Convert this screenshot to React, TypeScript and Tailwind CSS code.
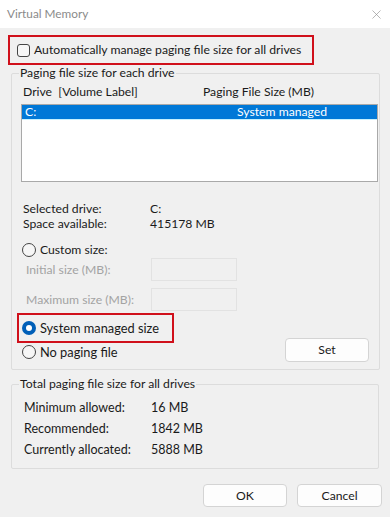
import { X } from 'lucide-react';

function Radio({ checked = false }: { checked?: boolean }) {
  if (checked) {
    return (
      <span className="w-[14px] h-[14px] rounded-full bg-[#005fb8] flex items-center justify-center shrink-0">
        <span className="w-[6px] h-[6px] rounded-full bg-white" />
      </span>
    );
  }
  return <span className="w-[14px] h-[14px] rounded-full border border-[#444] bg-[#f6f6f6] shrink-0" />;
}

function InfoRow({ label, value, h = 'h-[15px]' }: { label: string; value: string; h?: string }) {
  return (
    <div className={`flex items-center ${h}`}>
      <span className="w-[127px]">{label}</span>
      <span>{value}</span>
    </div>
  );
}

export default function App() {
  return (
    <div
      className="w-[390px] h-[517px] bg-[#f0f0f0] text-[12.2px] leading-[16px] text-[#1a1a1a] flex flex-col overflow-hidden whitespace-nowrap"
      style={{ fontFamily: 'Lato, "Noto Sans", sans-serif' }}
    >
      {/* title bar */}
      <div className="h-[28px] bg-white flex items-center justify-between pl-[7px] pr-[6px] shrink-0">
        <span className="text-[#8a8a8a] text-[11.8px]">Virtual Memory</span>
        <X size={15} strokeWidth={1} className="text-[#8a8a8a]" />
      </div>

      {/* auto manage */}
      <div className="mt-[7px] ml-[8px] w-[306px] h-[30px] border-[2.5px] border-[#d0101b] flex items-center pl-[7px] gap-[4px] shrink-0">
        <span className="w-[13px] h-[13px] border border-[#444] rounded-[3px] bg-[#f6f6f6] shrink-0" />
        <span>Automatically manage paging file size for all drives</span>
      </div>

      {/* group 1 */}
      <fieldset className="ml-[11px] w-[369px] border border-[#dcdcdc] rounded-[2px] pb-[7px] shrink-0">
        <legend className="ml-[7px] px-[1px] h-[16px]">Paging file size for each drive</legend>

        <div className="mt-[3px] flex h-[16px] pl-[11px]">
          <span className="w-[180px]">Drive&nbsp; [Volume Label]</span>
          <span>Paging File Size (MB)</span>
        </div>

        <div className="mt-[4px] ml-[9px] w-[357px] h-[78px] border border-[#a9a9a9] bg-white">
          <div className="h-[15px] bg-[#0078d7] text-white flex items-center pl-[3px] border-b border-[#c6f1ff]">
            <span className="w-[212px]">C:</span>
            <span>System managed</span>
          </div>
        </div>

        <div className="mt-[19px] pl-[11px]">
          <InfoRow label="Selected drive:" value="C:" />
          <InfoRow label="Space available:" value="415178 MB" />
        </div>

        <div className="mt-[11px] pl-[10px] flex items-center gap-[4px] h-[16px]">
          <Radio />
          <span>Custom size:</span>
        </div>

        <div className="flex items-center h-[23px] pl-[14px] text-[#a3a3a3]">
          <span className="w-[125px]">Initial size (MB):</span>
          <span className="w-[86px] h-[23px] border border-[#e2e2e2] bg-[#f0f0f0]" />
        </div>
        <div className="mt-[7px] flex items-center h-[23px] pl-[14px] text-[#a3a3a3]">
          <span className="w-[125px]">Maximum size (MB):</span>
          <span className="w-[86px] h-[23px] border border-[#e2e2e2] bg-[#f0f0f0]" />
        </div>

        <div className="mt-[2px] flex items-end justify-between">
          <div className="flex flex-col">
            <div className="ml-[5px] w-[157px] h-[30px] border-[2.5px] border-[#d0101b] flex items-center pl-[3px] gap-[4px]">
              <Radio checked />
              <span className="text-[12.8px]">System managed size</span>
            </div>
            <div className="pl-[10px] flex items-center gap-[4px] h-[17px]">
              <Radio />
              <span className="text-[12.8px]">No paging file</span>
            </div>
            <div className="h-[2px]" />
          </div>
          <button className="mr-[10px] w-[84px] h-[24px] bg-[#fdfdfd] border border-[#d4d4d4] rounded-[4px]">
            Set
          </button>
        </div>
      </fieldset>

      {/* group 2 */}
      <fieldset className="mt-[6px] ml-[11px] w-[368px] border border-[#dcdcdc] rounded-[2px] pb-[8px] shrink-0">
        <legend className="ml-[7px] px-[1px] h-[16px]">Total paging file size for all drives</legend>
        <div className="mt-[5px] pl-[12px] text-[12.5px]">
          <InfoRow label="Minimum allowed:" value="16 MB" h="h-[21px]" />
          <InfoRow label="Recommended:" value="1842 MB" h="h-[21px]" />
          <InfoRow label="Currently allocated:" value="5888 MB" h="h-[21px]" />
        </div>
      </fieldset>

      <div className="mt-[15px] flex justify-end gap-[10px] pr-[8px]">
        <button className="w-[84px] h-[23px] bg-[#fdfdfd] border border-[#d4d4d4] rounded-[4px]">OK</button>
        <button className="w-[85px] h-[23px] bg-[#fdfdfd] border border-[#d4d4d4] rounded-[4px]">Cancel</button>
      </div>
    </div>
  );
}
